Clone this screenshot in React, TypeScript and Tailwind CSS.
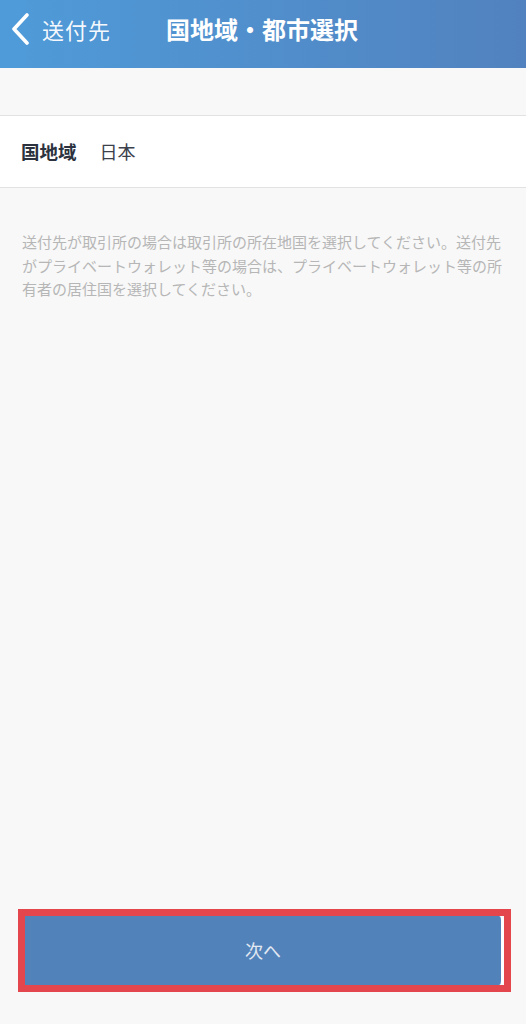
import React from 'react'

const font = { fontFamily: '"Noto Sans CJK JP", "Noto Sans", sans-serif' }

function BackChevron() {
  return (
    <svg width="20" height="32" viewBox="0 0 20 32" fill="none" className="shrink-0">
      <path d="M16 2 L3 16 L16 30" stroke="white" strokeWidth="3.6" strokeLinecap="round" strokeLinejoin="round" />
    </svg>
  )
}

export default function App() {
  return (
    <div
      className="flex h-[1024px] w-[526px] flex-col bg-[#f8f8f8] font-['Noto_Sans_CJK_JP',sans-serif]"
      style={font}
    >
      <header className="flex h-[68px] items-center bg-gradient-to-r from-[#4f9bd9] to-[#5182bf] pb-[10px] pl-[11px]">
        <BackChevron />
        <span className="ml-[11px] text-[22px] tracking-[1px] text-white/95">送付先</span>
        <h1 className="ml-[55px] text-[24px] font-bold text-white">国地域・都市選択</h1>
      </header>

      <div className="h-[47px]" />

      <div className="flex h-[73px] items-center gap-[23px] border-y border-[#e2e2e2] bg-white px-[21px]">
        <span className="text-[18.5px] font-bold text-[#2c323e]">国地域</span>
        <span className="text-[18px] text-[#3b404b]">日本</span>
      </div>

      <p className="mt-[42px] w-[504px] pl-[22px] text-[15px] leading-[23.5px] text-[#b6b6b6]">
        送付先が取引所の場合は取引所の所在地国を選択してください。送付先がプライベートウォレット等の場合は、プライベートウォレット等の所有者の居住国を選択してください。
      </p>

      <div className="mt-auto mb-[32px] ml-[18px] w-[493px] border-[7px] border-[#e4464e]">
        <button className="flex h-[69px] w-full items-center justify-center rounded-r-[5px] border-r-[3px] border-white bg-[#5282ba] text-[18px] text-[#e2e9f2]">
          次へ
        </button>
      </div>
    </div>
  )
}
